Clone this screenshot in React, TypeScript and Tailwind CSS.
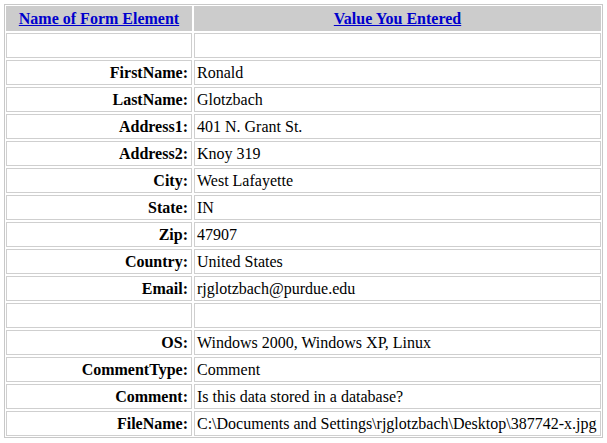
import React from "react";

const rows: [string, string][] = [
  ["", ""],
  ["FirstName:", "Ronald"],
  ["LastName:", "Glotzbach"],
  ["Address1:", "401 N. Grant St."],
  ["Address2:", "Knoy 319"],
  ["City:", "West Lafayette"],
  ["State:", "IN"],
  ["Zip:", "47907"],
  ["Country:", "United States"],
  ["Email:", "rjglotzbach@purdue.edu"],
  ["", ""],
  ["OS:", "Windows 2000, Windows XP, Linux"],
  ["CommentType:", "Comment"],
  ["Comment:", "Is this data stored in a database?"],
  ["FileName:", "C:\\Documents and Settings\\rjglotzbach\\Desktop\\387742-x.jpg"],
];

export default function App() {
  return (
    <div className="bg-white p-[4px] text-[16px] text-black" style={{ fontFamily: '"Liberation Serif", "Times New Roman", serif' }}>
      <div className="w-[599px] border border-[#c8c8c8] p-px">
        <div className="grid grid-cols-[186px_1fr] gap-[2px]">
          <div className="flex h-[25px] items-center justify-center bg-[#cccccc]">
            <a href="#" className="font-bold text-[#0000cc] underline">Name of Form Element</a>
          </div>
          <div className="flex h-[25px] items-center justify-center bg-[#cccccc]">
            <a href="#" className="font-bold text-[#0000cc] underline">Value You Entered</a>
          </div>
          {rows.map(([k, v], i) => (
            <React.Fragment key={i}>
              <div className="flex h-[25px] items-center justify-end border border-[#cfcfcf] px-[3px] font-bold">{k}</div>
              <div className="flex h-[25px] items-center whitespace-nowrap border border-[#cfcfcf] px-[2px]">{v}</div>
            </React.Fragment>
          ))}
        </div>
      </div>
    </div>
  );
}
